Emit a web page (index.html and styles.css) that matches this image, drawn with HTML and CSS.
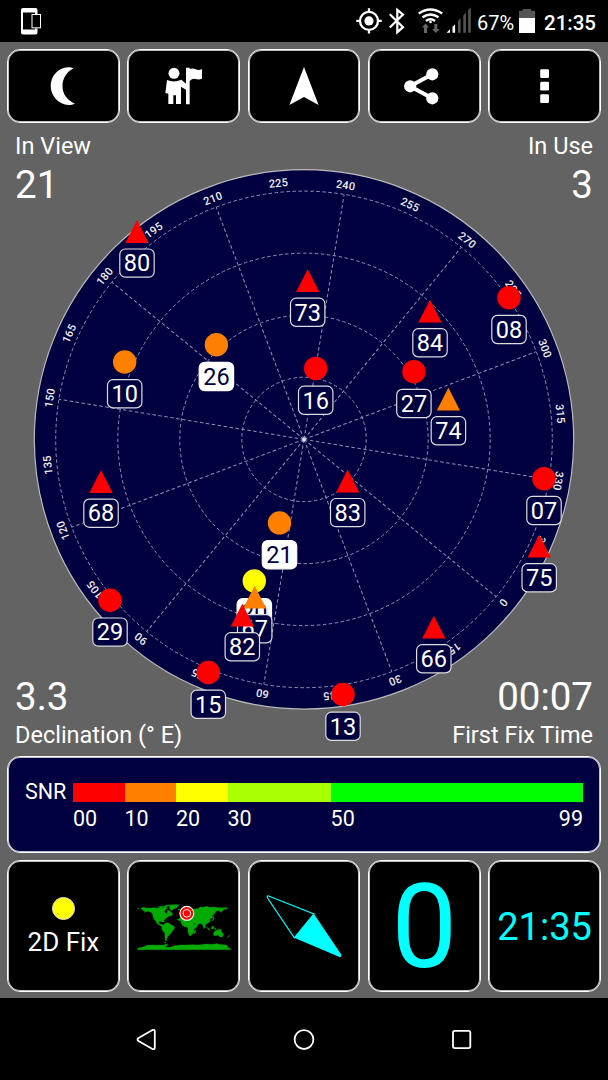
FILE: index.html
```
<!DOCTYPE html>
<html lang="en">
<head>
    <meta charset="UTF-8">
    <meta name="viewport" content="width=device-width, initial-scale=1.0">
    <title>GPS Status</title>
    <link rel="stylesheet" href="styles.css">
</head>
<body>
    <div class="statusbar">
        <svg class="notify" width="24" height="28" viewBox="20 7 24 28">
            <path d="M23 8h12.500q2 0 2 2v4h-2.500v-1.500H23v17h12V28.500h2.500v4q0 2-2 2H23q-2 0-2-2V10q0-2 2-2z" fill="#fff"/>
            <rect x="32" y="14.500" width="8.500" height="13.300" fill="#000" stroke="#fff" stroke-width="1"/>
        </svg>
        <svg class="signals" width="116" height="28" viewBox="355 7 116 28">
            <circle cx="368" cy="20.900" r="9" fill="none" stroke="#fff" stroke-width="2.300"/>
            <circle cx="368" cy="20.900" r="4.600" fill="#fff"/>
            <path d="M368 8.300v4M368 29.500v4M355.300 20.900h4M376.700 20.900h4" stroke="#fff" stroke-width="2.300"/>
            <path d="M388.800 14.300L402 27.200L396.300 32.200V9.800L402 14.600L388.800 27.500" fill="none" stroke="#fff" stroke-width="2.200"/>
            <path d="M417.800 13.500q11.700-8 23.400 0M421.500 17.300q8-5.500 16 0M425 20.900q4.500-3.300 9 0" fill="none" stroke="#fff" stroke-width="2.500"/>
            <circle cx="429.500" cy="22" r="1.300" fill="#fff"/>
            <path d="M424.500 23.500l3.700 4h-2.200v5.500h-3v-5.500h-2.200zM434.800 33l3.700-4h-2.200v-5h-3v5h-2.200z" fill="#666"/>
            <path d="M445.500 32.800l3.500-3.500v3.500zM451.500 32.800v-6l2.600-2.600v8.600z" fill="#fff"/>
            <path d="M457 32.800V21l2.600-3v14.800zM462.300 32.800V15.600l2.600-3v20.200zM467.200 32.800V10.300l2.600-3v25.500z" fill="#555"/>
        </svg>
        <span class="percent">67%</span>
        <svg class="battery" width="16" height="26" viewBox="519 8 16 26">
            <path d="M519 10.800h3.700V9h8.300v1.800h4V18h-16z" fill="#555"/>
            <path d="M519 18h16v15h-16z" fill="#fff"/>
        </svg>
        <span class="clock">21:35</span>
    </div>

    <div class="main">
        <div class="tools">
            <div class="box">
                <svg width="40" height="40" viewBox="43 66 40 40">
                    <path d="M73.500 68.200C71 67.300 69 67.200 68 67.300C58 68 50.700 76 50.700 86.200C50.700 96 59 104.500 68.500 105C71 105 73 104.500 75 103.700C67 100 62.500 94 62.500 86C62.500 78 67 71.500 73.500 68.200z" fill="#fff"/>
                </svg>
            </div>
            <div class="box">
                <svg width="40" height="40" viewBox="492 198 120 120">
                    <circle cx="522" cy="220" r="16.500" fill="#fff"/>
                    <path d="M501 240q21 9 43-1L559 252V270L543 260V312H528V286H520V312H505V281L496 279z" fill="#fff"/>
                    <path d="M558 203h11v4q9-3 18 1q9 4 19-1v29q-10 4-19 1q-9-3-18 6v70h-11z" fill="#fff"/>
                </svg>
            </div>
            <div class="box">
                <svg width="40" height="40" viewBox="284 66 40 40">
                    <path d="M304 67L318.600 105L304 97L289.400 105z" fill="#fff"/>
                </svg>
            </div>
            <div class="box">
                <svg width="40" height="40" viewBox="404 66 40 40">
                    <path d="M432.300 74.300L410 86.300L432.300 98.300" fill="none" stroke="#fff" stroke-width="4"/>
                    <circle cx="432.300" cy="74.300" r="6.100" fill="#fff"/>
                    <circle cx="410.200" cy="86.300" r="6.100" fill="#fff"/>
                    <circle cx="432.300" cy="98.300" r="6.100" fill="#fff"/>
                </svg>
            </div>
            <div class="box">
                <svg width="40" height="40" viewBox="525 66 40 40">
                    <rect x="540.200" y="69.300" width="8.800" height="8.800" rx="1.300" fill="#fff"/>
                    <rect x="540.200" y="81.800" width="8.800" height="8.800" rx="1.300" fill="#fff"/>
                    <rect x="540.200" y="94.200" width="8.800" height="8.800" rx="1.300" fill="#fff"/>
                </svg>
            </div>
        </div>

        <div class="sky">
            <svg class="radar" width="608" height="633" viewBox="0 123 608 633">
                <defs>
                    <circle id="ball" r="11.700"/>
                    <path id="tri" d="M0-11.300L11.600 11.600H-11.600z"/>
                    <rect id="tag" x="-17.200" y="17.700" width="34.400" height="28.200" rx="5.500"/>
                </defs>
                <circle class="disc" cx="304" cy="439.400" r="269.700"/>
                <g id="grid" class="grid" transform="translate(304 439.400)">
                    <circle r="62.200"/>
                    <circle r="124.200"/>
                    <circle r="186.200"/>
                    <circle r="248.300"/>
                </g>
                <g id="scale" class="scale" transform="translate(304 439.400)"></g>
                <circle cx="304" cy="439.400" r="2" fill="#ddd"/>
                <g id="sats" class="sats"></g>
            </svg>
            <div class="corner tl"><span class="label">In View</span><span class="value">21</span></div>
            <div class="corner tr"><span class="label">In Use</span><span class="value">3</span></div>
            <div class="corner bl"><span class="value">3.3</span><span class="label">Declination (° E)</span></div>
            <div class="corner br"><span class="value">00:07</span><span class="label">First Fix Time</span></div>
        </div>

        <div class="box snr">
            <span class="name">SNR</span>
            <div class="bar">
                <div class="seg red">00</div>
                <div class="seg orange">10</div>
                <div class="seg yellow">20</div>
                <div class="seg lime">30</div>
                <div class="seg green">50<span>99</span></div>
            </div>
        </div>

        <div class="tiles">
            <div class="box fix">
                <div class="dot"></div>
                <span>2D Fix</span>
            </div>
            <div class="box">
                <svg width="110" height="70" viewBox="-4 3 330 210">
                    <g fill="#0a0" stroke="#0a0" stroke-width="1">
                        <path d="M21 55l4 0l0 3zM32 55l6-3l10 2l14 0l12-1l10 2l8-3l8 3l6-4l4 4l-4 5l-4 3l2 5l5 3l3-6l-2-5l8 2l4 5l6 6l-4 3l-9 3l-6 4l-5 5l-4 4l-2 5l-3-4l-9 1l-1 6l5 3l6 0l3 6l5 3l-1 2l-8-4l-8-5l-7-4l-3-7l-5-5l-4-8l-1-8l-5-6l-10-3l-10 3l2-4l-5-1z"/>
                        <path d="M82 51l10-3l8 2l6-4l12-1l-5 4l-7 2l6 4l-10-3l-10 1zM114 47l10-3l22 0l-3 5l-4 5l-10 3l-6 5l-5-5l0-7zM142 58l6-1l2 2l-5 2z"/>
                        <path d="M89 93l8-1l7 3l-5 0zM103 101l5-3l9 2l5 4l9 5l2 4l-4 7l-5 6l-4 6l-6 5l-3 5l-3 7l1 4l-4-2l-1-10l-1-12l-5-6l-4-7l2-7z"/>
                        <path d="M151 91l6-4l10 1l7 3l10-1l5 8l5 8l6 0l-4 7l-6 6l1 7l-4 5l-4 5l-5 2l-3-5l-2-9l0-8l-3-5l-8-1l-6-4l-3-6z"/>
                        <path d="M150 85l0-6l7 0l3-5l0-8l-2-4l6-6l9 0l6 5l8-2l7-3l9 0l7-5l9 1l10-3l8 3l15-1l12 2l12 0l14 0l0 4l-8 1l-6 5l-6 4l-2-5l-8 0l-5 4l-4 7l-5 4l2 6l-4 1l-5 3l1 6l-6 6l-6 2l-3 5l0 5l-4 5l-3-9l-4-5l-4-2l-5 2l-5 5l-1 6l-3-6l-2-7l-7-2l-3 7l-7 4l-5-9l-3-6l-7-1l-8-4l-6 3l-9-3z"/>
                        <path d="M193 121l3-2l-1 9l-4 3l-1-4zM229 112l5 2l6 7l-5-2zM243 112l6-4l2 5l-3 4l-5-1zM252 115l5 0l-2 5zM261 116l9 3l5 4l-8-1zM249 128l6-6l7-3l4 3l4-4l3 7l6 6l0 5l-4 5l-6 0l-3-4l-6-1l-7 2l-3-4zM296 137l3-3l-4 6l-5 3z"/>
                        <path d="M244 92l4-4l2-8l2 5l-3 6zM101 158l5-1l1 2z"/>
                        <path d="M22 174l18-3l10-5l19-1l8 1l12-1l11 1l10-4l2 4l-9 6l15 0l14-4l17-3l16 0l20-1l20 1l20-3l20 1l15-2l14 3l14 1l5 3l-4 4l11 3l0 4H22z"/>
                    </g>
                    <circle cx="169.500" cy="70" r="22.500" fill="#fff"/>
                    <circle cx="169.500" cy="70" r="19" fill="red"/>
                    <circle cx="169.500" cy="70" r="11.500" fill="none" stroke="#fff" stroke-width="3"/>
                </svg>
            </div>
            <div class="box">
                <svg width="80" height="70" viewBox="264 891 80 70">
                    <path d="M268.500 896L314 914L294.300 937.800L267.500 898Q266.500 895.500 268.500 896z" fill="none" stroke="cyan" stroke-width="1.200"/>
                    <path d="M314 914L341.500 955Q341.300 957.500 339.500 957L294.300 937.800z" fill="cyan"/>
                </svg>
            </div>
            <div class="box speed">0</div>
            <div class="box time">21:35</div>
        </div>
    </div>

    <div class="navbar">
        <svg width="24" height="24" viewBox="135 1027 24 24">
            <path d="M138.500 1038L152 1030.200Q154.800 1029 154.800 1031.500V1047.500Q154.800 1050 152 1048.800L138.500 1041Q136.500 1039.500 138.500 1038z"/>
        </svg>
        <svg width="24" height="24" viewBox="292 1027 24 24">
            <circle cx="304" cy="1039.600" r="9.400"/>
        </svg>
        <svg width="24" height="24" viewBox="449 1027 24 24">
            <rect x="453" y="1030.800" width="17.300" height="17.300" rx="1.800"/>
        </svg>
    </div>

    <script>
        // bearing on screen of the 0 degree mark
        var heading=129.3;
        // number, x, y, shape, colour, used in fix
        var sats=[
            ["07",544,478.7,"ball","red"],
            ["08",509,297.7,"ball","red"],
            ["10",124.7,362,"ball","orange"],
            ["13",343,694.5,"ball","red"],
            ["15",208.3,672.5,"ball","red"],
            ["16",315.7,368.5,"ball","red"],
            ["20",254.3,581,"ball","yellow",true],
            ["21",279.5,522.9,"ball","orange",true],
            ["26",216.4,344.7,"ball","orange",true],
            ["27",413.9,371.7,"ball","red"],
            ["29",110,600.3,"ball","red"],
            ["66",433.8,627,"tri","red"],
            ["67",254.7,597,"tri","orange"],
            ["68",101,481.4,"tri","red"],
            ["73",307.7,280.5,"tri","red"],
            ["74",448.4,399,"tri","orange"],
            ["75",539.2,546,"tri","red"],
            ["80",137,231.3,"tri","red"],
            ["82",242.3,615,"tri","red"],
            ["83",347.7,480.8,"tri","red"],
            ["84",430,311,"tri","red"]
        ];
        var lines="";
        var marks="";
        for(var d=0;d<360;d+=15){
            var turn=heading+d;
            if(d%30==0){
                lines+='<line y2="-248.3" transform="rotate('+turn+')"/>';
            }
            marks+='<text y="-253.8" transform="rotate('+turn+')">'+d+'</text>';
        }
        document.querySelector("#grid").innerHTML+=lines;
        document.querySelector("#scale").innerHTML=marks;

        var out="";
        sats.forEach((s)=>{
            out+='<g transform="translate('+s[1]+' '+s[2]+')"'+(s[5]?' class="used"':'')+'>'
                +'<use href="#'+s[3]+'" class="'+s[4]+'"/>'
                +'<use href="#tag" class="tag"/>'
                +'<text y="40.1">'+s[0]+'</text></g>';
        });
        document.querySelector("#sats").innerHTML=out;
    </script>
</body>
</html>
```
FILE: styles.css
```
*{
    box-sizing:border-box;
}
body{
    margin:0;
    width:608px;
    height:1080px;
    overflow:hidden;
    background-color:#636363;
    color:white;
    font-family: Roboto, sans-serif;
}
svg{
    display:block;
}
.statusbar{
    height:42px;
    padding:0 13px 0 20px;
    background-color:black;
    display:flex;
    align-items:center;
}
.notify{
    margin-right:auto;
}
.signals{
    margin-right:-1px;
}
.percent{
    margin-left:6px;
    width:38px;
    font-size:20px;
    padding-top:3px;
}
.battery{
    margin-left:4px;
}
.clock{
    width:51px;
    margin-left:9px;
    font-size:20.5px;
    font-weight:500;
    padding-top:3px;
}
.main{
    padding:7px 7px 0;
    height:956px;
}
.box{
    border:1px solid white;
    border-radius: 13px;
    box-shadow: inset 0 0 0 1px rgba(255,255,255,.75);
    background-color:black;
    display:flex;
    align-items:center;
    justify-content:center;
}
.tools,.tiles{
    display:grid;
    grid-template-columns:repeat(5,1fr);
    gap:7.5px;
}
.tools{
    height:74px;
}
.sky{
    display:grid;
    height:633px;
    margin:0 -7px;
}
.radar,.corner{
    grid-area:1/1;
}
.corner{
    display:flex;
    flex-direction:column;
    margin:0 15px;
}
.tl{
    place-self:start;
    padding-top:9px;
}
.tr{
    place-self:start end;
    padding-top:9px;
    text-align:right;
}
.bl{
    place-self:end start;
    padding-bottom:6px;
}
.br{
    place-self:end;
    padding-bottom:6px;
    text-align:right;
}
.label{
    font-size:23.5px;
    line-height:29px;
}
.value{
    font-size:38.5px;
    line-height:48px;
}
.disc{
    fill:#000040;
    stroke:#bbb;
    stroke-width:1.2;
}
.grid{
    fill:none;
    stroke:#9292b8;
    stroke-width:1;
    stroke-dasharray:3.5 2.5;
}
.scale{
    fill:#eee;
    font-size:11px;
    font-weight:500;
    letter-spacing:.2px;
    text-anchor:middle;
}
.sats text{
    fill:white;
    font-size:23.5px;
    text-anchor:middle;
}
.sats .tag{
    fill:#000040;
    stroke:#ddd;
    stroke-width:1.2;
}
.sats .used .tag{
    fill:white;
    stroke:white;
}
.sats .used text{
    fill:#000040;
}
.sats .red{
    fill:#f00;
}
.sats .orange{
    fill:#ff8000;
}
.sats .yellow{
    fill:#ff0;
}
.snr{
    height:97px;
    background-color:#000040;
    align-items:flex-start;
    justify-content:flex-start;
    padding:26px 17px 0;
}
.name{
    width:48px;
    font-size:21.5px;
    line-height:17px;
}
.bar{
    display:grid;
    grid-template-columns:10fr 10fr 10fr 20fr 49fr;
    width:510px;
}
.seg{
    display:flex;
    justify-content:space-between;
    border-top:19px solid;
    padding-top:4px;
    font-size:21.5px;
    line-height:26px;
}
.seg.red{
    border-color:#f00;
}
.seg.orange{
    border-color:#ff8000;
}
.seg.yellow{
    border-color:#ff0;
}
.seg.lime{
    border-color:#a8ff00;
}
.seg.green{
    border-color:#0f0;
}
.tiles{
    height:132px;
    margin-top:7px;
}
.fix{
    flex-direction:column;
    font-size:26px;
    line-height:30px;
    padding-top:2px;
}
.dot{
    width:23px;
    height:23px;
    border:1px solid #ddd;
    border-radius: 50%;
    background-color:#ff0;
    margin-bottom:7px;
}
.speed,.time{
    color:cyan;
}
.speed{
    font-size:117px;
    line-height:117px;
    padding-top:3px;
}
.time{
    font-size:38px;
    padding-top:1px;
}
.navbar{
    height:82px;
    margin-top:-0px;
    background-color:black;
    display:flex;
    align-items:center;
    justify-content:center;
    gap:133px;
}
.navbar svg{
    fill:none;
    stroke:white;
    stroke-width:1.8;
}
```
